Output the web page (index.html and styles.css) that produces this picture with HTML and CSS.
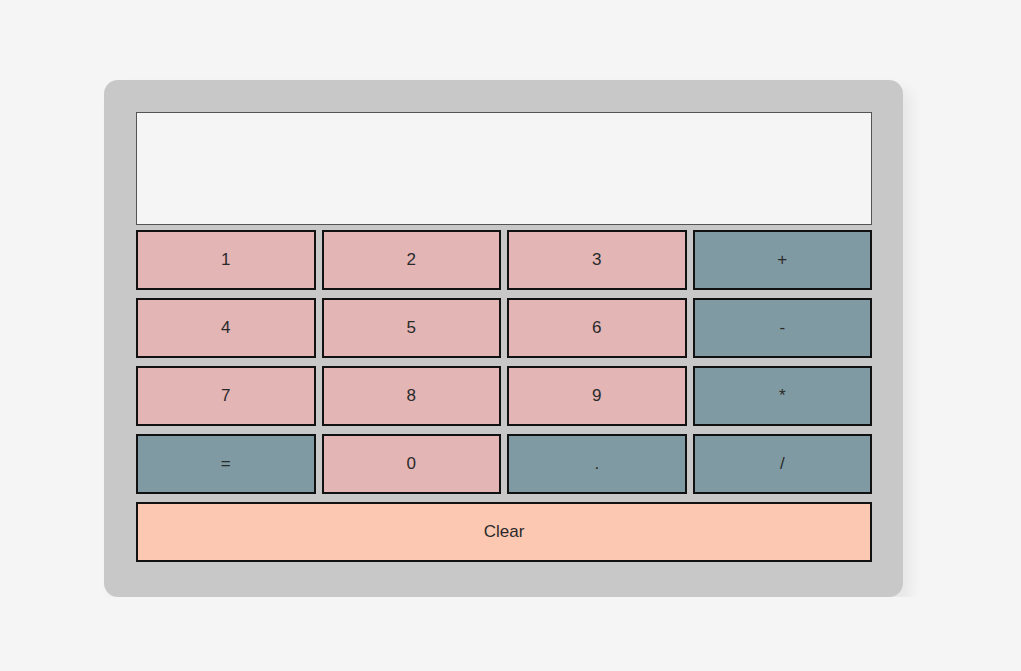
FILE: index.html
```html
<!DOCTYPE html>
<html>
<head>
<meta charset="utf-8">
<link rel="stylesheet" href="styles.css">
</head>
<body>
<div class="calc">
  <div class="display"></div>
  <div class="keys">
    <button class="key num">1</button>
    <button class="key num">2</button>
    <button class="key num">3</button>
    <button class="key op">+</button>
    <button class="key num">4</button>
    <button class="key num">5</button>
    <button class="key num">6</button>
    <button class="key op">-</button>
    <button class="key num">7</button>
    <button class="key num">8</button>
    <button class="key num">9</button>
    <button class="key op">*</button>
    <button class="key op">=</button>
    <button class="key num">0</button>
    <button class="key op">.</button>
    <button class="key op">/</button>
    <button class="key clear">Clear</button>
  </div>
</div>
</body>
</html>
```
FILE: styles.css
```css
html, body {
  margin: 0;
  padding: 0;
  background: #f5f5f5;
  font-family: "Liberation Sans", Arial, sans-serif;
}
body {
  padding: 80px 0 0 104px;
}
.calc {
  width: 736px;
  padding: 32px 31px 35px 32px;
  background: #c8c8c8;
  border-radius: 14px;
  box-shadow: 8px 8px 14px rgba(0, 0, 0, 0.06);
}
.display {
  height: 111px;
  background: #f5f5f5;
  border: 1px solid #555;
  margin-bottom: 5px;
}
.keys {
  display: grid;
  grid-template-columns: repeat(4, 1fr);
  column-gap: 6px;
  row-gap: 8px;
}
.key {
  height: 60px;
  border: 2px solid #111;
  font-family: "Liberation Sans", Arial, sans-serif;
  font-size: 17px;
  color: #2a2a2a;
  margin: 0;
  padding: 0;
}
.num { background: #e3b5b5; }
.op { background: #7f9aa2; }
.clear {
  grid-column: 1 / -1;
  background: #fcc8b2;
}
```
